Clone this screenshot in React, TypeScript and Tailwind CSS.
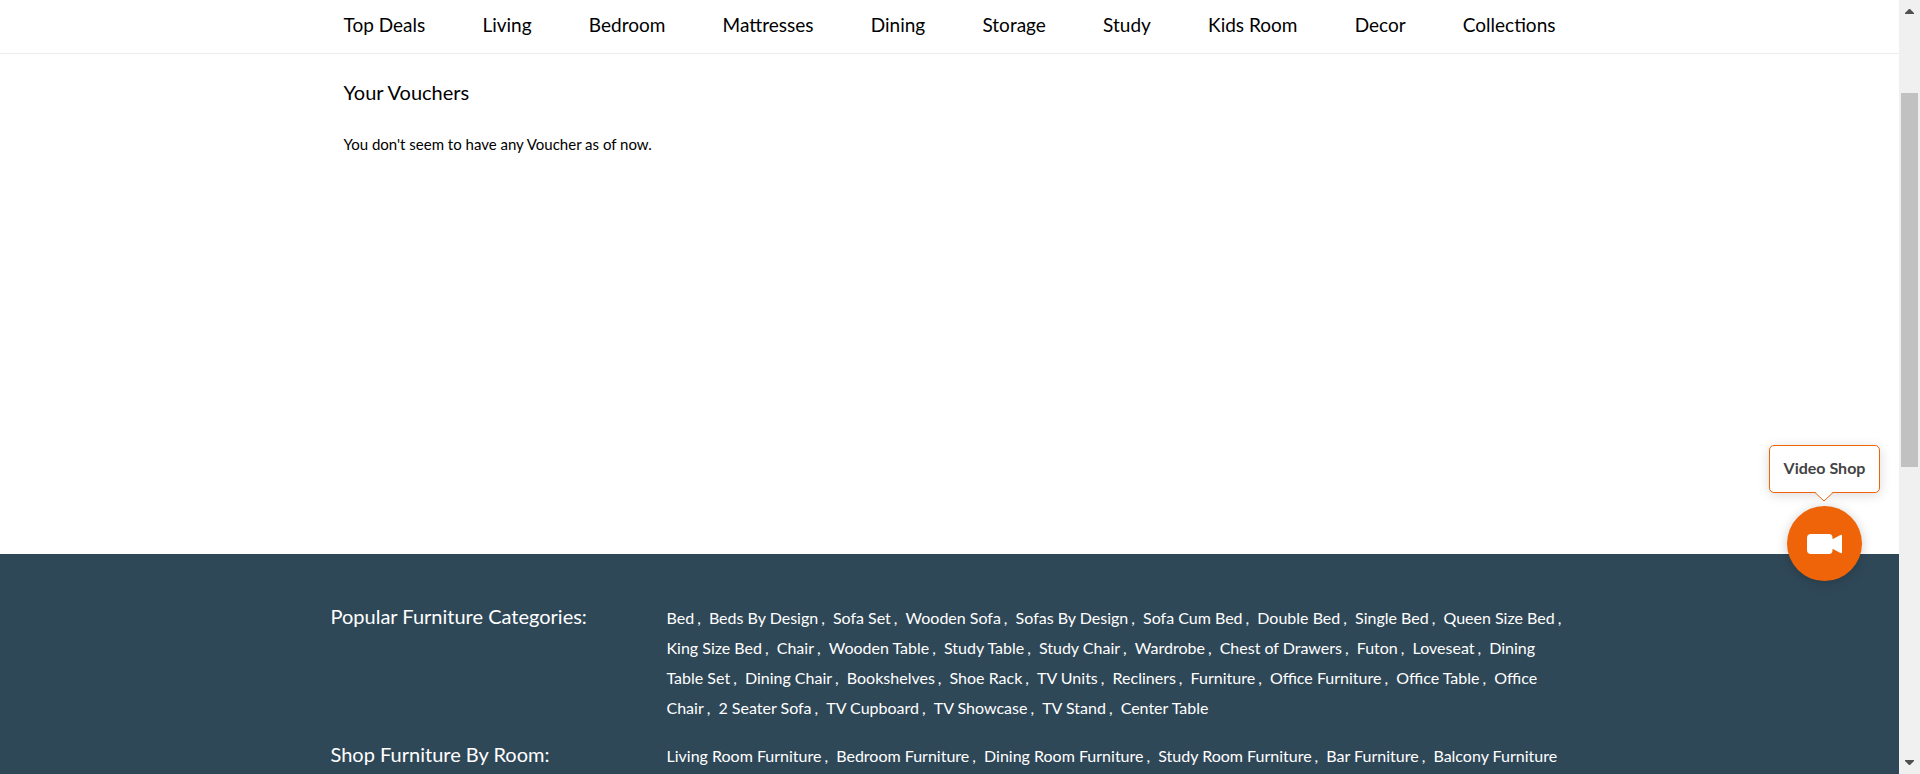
const navItems = [
  "Top Deals", "Living", "Bedroom", "Mattresses", "Dining",
  "Storage", "Study", "Kids Room", "Decor", "Collections",
];

const categories = [
  "Bed", "Beds By Design", "Sofa Set", "Wooden Sofa", "Sofas By Design", "Sofa Cum Bed",
  "Double Bed", "Single Bed", "Queen Size Bed", "King Size Bed", "Chair", "Wooden Table",
  "Study Table", "Study Chair", "Wardrobe", "Chest of Drawers", "Futon", "Loveseat",
  "Dining Table Set", "Dining Chair", "Bookshelves", "Shoe Rack", "TV Units", "Recliners",
  "Furniture", "Office Furniture", "Office Table", "Office Chair", "2 Seater Sofa",
  "TV Cupboard", "TV Showcase", "TV Stand", "Center Table",
];

const rooms = [
  "Living Room Furniture", "Bedroom Furniture", "Dining Room Furniture",
  "Study Room Furniture", "Bar Furniture", "Balcony Furniture",
];

function LinkGroup({ title, links }: { title: string; links: string[] }) {
  return (
    <section className="mb-[17px] flex">
      <h2 className="w-[336px] shrink-0 text-[20px] leading-7">{title}</h2>
      <ul className="min-w-0 flex-1 pt-px text-[16px] leading-[30px]">
        {links.map((label, i) => (
          <li key={label} className="inline">
            <a href="#" className="hover:underline">{label}</a>
            {i < links.length - 1 && <span className="mr-1 ml-[3px]">,</span>}{" "}
          </li>
        ))}
      </ul>
    </section>
  );
}

function VideoShop() {
  return (
    <div className="absolute top-[445px] right-10 flex flex-col items-center">
      <a
        href="#"
        className="relative flex h-12 w-[111px] items-center justify-center rounded-[5px] border border-[#ef6409] bg-white pb-0.5 text-[16px] font-bold text-[#444] shadow-[0_2px_12px_rgba(0,0,0,0.15)]"
      >
        Video Shop
        <svg className="absolute top-[46px] left-[45px]" width="18" height="10" viewBox="0 0 18 10" aria-hidden="true">
          <path d="M0 0H18L9 9Z" fill="#fff" />
          <path d="M0 .5L9 9L18 .5" fill="none" stroke="#ef6409" />
        </svg>
      </a>
      <button
        type="button"
        aria-label="Start video shopping"
        className="mt-[13px] flex size-[75px] items-center justify-center rounded-full bg-[#ef6409] shadow-[0_2px_12px_rgba(0,0,0,0.2)]"
      >
        <svg width="35" height="20" viewBox="0 0 35 20" fill="#fff" aria-hidden="true">
          <path d="M4 0H22Q25.500 0 25.500 4V5.200L33.500 .9Q35 .4 35 2V18Q35 19.600 33.500 19.100L25.500 14.800V16Q25.500 20 22 20H4Q0 20 0 16V4Q0 0 4 0Z" />
        </svg>
      </button>
    </div>
  );
}

function ScrollRail() {
  return (
    <div className="flex w-[21px] shrink-0 flex-col items-center bg-[#f0f0f0]" aria-hidden="true">
      <svg width="9" height="5" viewBox="0 0 9 5" className="mt-[9px] shrink-0" fill="#505050">
        <path d="M4 0H5L9 4V5H0V4Z" />
      </svg>
      <div className="mt-[79px] h-[374px] w-[17px] shrink-0 bg-[#c1c1c1]" />
      <svg width="9" height="5" viewBox="0 0 9 5" className="mt-auto mb-[9px] shrink-0" fill="#505050">
        <path d="M0 0H9V1L5 5H4L0 1Z" />
      </svg>
    </div>
  );
}

export default function App() {
  return (
    <div className="relative flex h-screen overflow-hidden bg-white font-['Lato',sans-serif] text-black">
      <div className="min-w-0 flex-1 overflow-hidden">
        <header className="border-b border-[#ececec]">
          <nav className="mx-auto flex max-w-[1240px] justify-between px-[14px] pt-[13px] pb-4 text-[19px] leading-6">
            {navItems.map((item) => (
              <a key={item} href="#">{item}</a>
            ))}
          </nav>
        </header>
        <main className="mx-auto min-h-[500px] max-w-[1240px] px-[14px] pt-6">
          <h1 className="text-[20px] leading-7">Your Vouchers</h1>
          <p className="mt-7 text-[15px] leading-5">You don't seem to have any Voucher as of now.</p>
        </main>
        <footer className="bg-[#2f4858] pt-12 pb-10 text-white">
          <div className="mx-auto max-w-[1238px]">
            <LinkGroup title="Popular Furniture Categories:" links={categories} />
            <LinkGroup title="Shop Furniture By Room:" links={rooms} />
          </div>
        </footer>
      </div>
      <ScrollRail />
      <VideoShop />
    </div>
  );
}
